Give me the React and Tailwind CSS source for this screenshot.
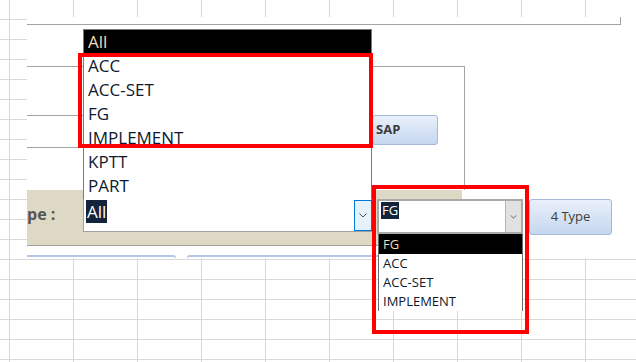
import React from 'react';

const leftItems = ['ACC', 'ACC-SET', 'FG', 'IMPLEMENT', 'KPTT', 'PART'];
const rightItems = ['ACC', 'ACC-SET', 'IMPLEMENT'];

const Chevron = ({ w = 8, h = 5 }) => (
  <svg width={w} height={h} viewBox="0 0 8 5">
    <path d="M0.5 0.5 L4 4 L7.5 0.5" fill="none" stroke="#4a4a4a" strokeWidth="1" />
  </svg>
);

export default function App() {
  return (
    <div className="relative w-[636px] h-[362px] overflow-hidden bg-white bg-[image:linear-gradient(to_right,#d9d9d9_1px,transparent_1px),linear-gradient(to_bottom,#d9d9d9_1px,transparent_1px)] bg-[length:64px_20px] bg-[position:9px_19px] pl-[27px] pt-[17px] font-['Open_Sans',sans-serif]">
      {/* form window */}
      <div className="relative h-[241px] bg-white flex flex-col">
        <div className="h-[8px] w-[594px] border-b border-r border-[#a3a3a3]" />

        <div className="mt-[41px] w-[438px] h-[124px] border-t border-r border-[#a3a3a3] pt-[48px] flex items-start">
          <div className="w-[345px] h-[33px] border-y border-[#a3a3a3]" />
          <button className="w-[66px] h-[30px] rounded-[3px] border border-[#a3b9d8] bg-gradient-to-b from-[#e9f0fa] to-[#c5d7ef] pl-[3px] text-left text-[13px] font-bold text-[#3b3b3b]">
            SAP
          </button>
        </div>

        <div className="flex items-start h-[56px]">
          {/* tan bar */}
          <div className="w-[435px] h-[56px] bg-[#ddd9c4] border-b border-[#a0a0a0] flex items-start">
            <div className="w-[56px] h-[34px] mt-[7px] flex items-center text-[16px] font-bold text-[#555555]">pe :</div>
            <div className="relative w-[289px] h-[34px] mt-[8px] border border-[#a0a0a0] bg-white flex items-start">
              <span className="ml-[2px] mt-[1px] h-[23px] px-[1px] bg-[#13233a] text-white text-[17px] leading-[23px]">All</span>
              <div className="ml-auto mr-[-1px] mt-[1px] w-[18px] h-[31px] border border-[#0078d7] bg-[#e5f1fb] flex items-center justify-center">
                <Chevron />
              </div>
              {/* open list */}
              <div className="absolute bottom-full left-[-1px] w-[289px] border border-b-0 border-[#7a7a7a] bg-white pb-[1px]">
                <div className="h-[24px] bg-black pl-[4px] text-[17px] leading-[24px] text-[#f4dcb4]">All</div>
                {leftItems.map((item) => (
                  <div key={item} className="h-[24px] pl-[4px] text-[17px] leading-[24px] text-[#0d1930]">
                    {item}
                  </div>
                ))}
              </div>
            </div>
          </div>

          <div className="ml-[-85px] mt-[9px] flex items-start">
            <div className="relative w-[146px] h-[35px] border-2 border-[#a9a9a9] bg-white flex items-stretch">
              <span className="ml-[2px] mt-[1px] h-[17px] px-[1px] self-start bg-[#13233a] text-white text-[13px] leading-[17px]">FG</span>
              <div className="ml-auto w-[16px] bg-[#e1e1e1] border-l border-[#b4b4b4] flex items-center justify-center">
                <Chevron w={7} h={4} />
              </div>
              <div className="absolute top-[33px] left-[-1px] w-[145px] border-x border-[#6b6b6b] bg-white">
                <div className="h-[20px] bg-black pl-[4px] text-[13px] leading-[20px] text-[#f4dcb4]">FG</div>
                {rightItems.map((item) => (
                  <div key={item} className="h-[19px] pl-[4px] text-[13px] leading-[19px] text-[#0d1930]">
                    {item}
                  </div>
                ))}
              </div>
            </div>
            <button className="ml-[6px] w-[83px] h-[36px] rounded-[3px] border border-[#a3b9d8] bg-gradient-to-b from-[#e9f0fa] to-[#c5d7ef] text-[13px] text-[#3d3d3d]">
              4 Type
            </button>
          </div>
        </div>

        {/* tab tops */}
        <div className="mt-[9px] flex items-start">
          <div className="w-[149px] h-[3px] border-t-2 border-r border-[#b0c7e6] rounded-tr-[4px]" />
          <div className="ml-[11px] w-[290px] h-[3px] border-t-2 border-l border-[#b0c7e6] rounded-tl-[4px]" />
        </div>
      </div>

      {/* highlight boxes */}
      <div className="absolute left-[78px] top-[53px] w-[295px] h-[95px] border-4 border-[#ff0000]" />
      <div className="absolute left-[372px] top-[185px] w-[157px] h-[149px] border-4 border-[#ff0000]" />
    </div>
  );
}
